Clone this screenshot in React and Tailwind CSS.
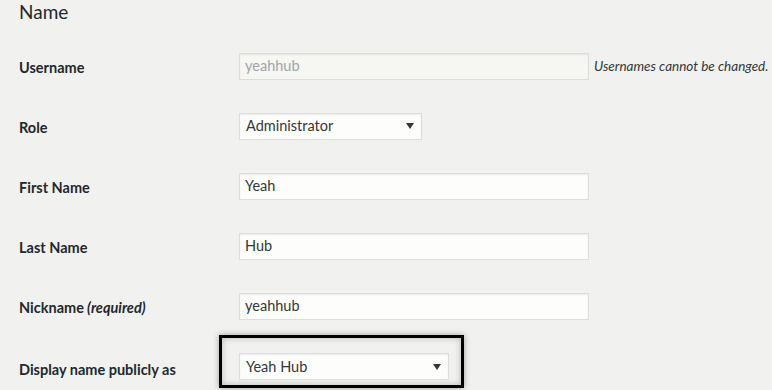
const font = { fontFamily: 'Lato, "Open Sans", Arial, sans-serif' };

function Caret() {
  return (
    <svg width="8" height="6" viewBox="0 0 8 6" className="shrink-0">
      <path d="M0 0h8L4 6z" fill="#32373c" />
    </svg>
  );
}

function TextBox({ value, disabled }) {
  return (
    <div
      className={`flex h-[27px] w-[350px] shrink-0 items-center border border-[#dddddd] px-[5px] text-[14.5px] shadow-[inset_0_1px_2px_rgba(0,0,0,0.07)] ${
        disabled ? "bg-[#f6f6f3] text-[#a0a5aa]" : "bg-[#fdfdfb] text-[#32373c]"
      }`}
    >
      {value}
    </div>
  );
}

function SelectBox({ value, width }) {
  return (
    <div
      className={`flex h-[27px] shrink-0 items-center justify-between border border-[#dddddd] bg-[#fdfdfb] pl-[6px] pr-[7px] text-[14.5px] text-[#32373c] shadow-[inset_0_1px_2px_rgba(0,0,0,0.07)] ${width}`}
    >
      <span>{value}</span>
      <Caret />
    </div>
  );
}

function Row({ label, hint, children }) {
  return (
    <div className="flex h-[60px] items-center">
      <div className="w-[220px] shrink-0 whitespace-nowrap pt-[3px] text-[14.5px] font-bold text-[#23282d]">
        {label}
        {hint && <span className="italic"> {hint}</span>}
      </div>
      {children}
    </div>
  );
}

export default function App() {
  return (
    <div className="h-[390px] w-[772px] overflow-hidden bg-[#f1f1ef] pl-[19px]" style={font}>
      <h2 className="h-[36px] pt-[1px] text-[19px] font-normal leading-[22px] text-[#23282d]">Name</h2>

      <Row label="Username">
        <TextBox value="yeahhub" disabled />
        <span className="ml-[5px] whitespace-nowrap text-[13.5px] italic text-[#32373c]">
          Usernames cannot be changed.
        </span>
      </Row>

      <Row label="Role">
        <SelectBox value="Administrator" width="w-[183px]" />
      </Row>

      <Row label="First Name">
        <TextBox value="Yeah" />
      </Row>

      <Row label="Last Name">
        <TextBox value="Hub" />
      </Row>

      <Row label="Nickname" hint="(required)">
        <TextBox value="yeahhub" />
      </Row>

      <div className="flex h-[60px] items-start">
        <div className="w-[200px] shrink-0 whitespace-nowrap pt-[23px] text-[14.5px] font-bold text-[#23282d]">
          Display name publicly as
        </div>
        <div className="-mt-px border-[3px] border-black pb-[5px] pl-[17px] pr-[12px] pt-[15px] shadow-[0_0_6px_rgba(0,0,0,0.35),inset_0_0_6px_rgba(0,0,0,0.25)]">
          <SelectBox value="Yeah Hub" width="w-[210px]" />
        </div>
      </div>
    </div>
  );
}
